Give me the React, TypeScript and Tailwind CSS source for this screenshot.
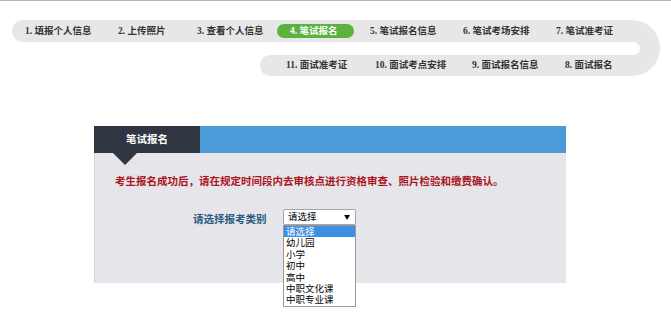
import React from "react";

const F = { fontFamily: '"Liberation Serif","Noto Sans CJK SC",serif' };
const S = { fontFamily: '"Noto Sans CJK SC",sans-serif' };

export default function App() {
  const row1 = [
    { t: "1. 填报个人信息", w: "w-[93px]" },
    { t: "2. 上传照片", w: "w-[79px]" },
    { t: "3. 查看个人信息", w: "w-[80px]" },
  ];
  const row1b = [
    { t: "5. 笔试报名信息", w: "w-[93px]" },
    { t: "6. 笔试考场安排", w: "w-[93px]" },
    { t: "7. 笔试准考证", w: "w-[70px]" },
  ];
  const row2 = [
    { t: "11. 面试准考证", w: "w-[89px]" },
    { t: "10. 面试考点安排", w: "w-[97px]" },
    { t: "9. 面试报名信息", w: "w-[93px]" },
    { t: "8. 面试报名", w: "w-[60px]" },
  ];
  const opts = ["请选择", "幼儿园", "小学", "初中", "高中", "中职文化课", "中职专业课"];

  return (
    <div className="w-[671px] h-[326px] bg-white overflow-hidden relative" style={F}>
      <div className="h-px bg-[#a3bac9]" />
      {/* steps */}
      <div className="ml-[12px] mt-[19px] w-[648px] flex text-[9.5px] font-bold text-[#333]">
        <div className="w-[620px] flex flex-col">
          <div className="h-[22px] bg-[#e7e7e7] rounded-l-full flex items-center pl-[13px]">
            {row1.map((s) => (
              <div key={s.t} className={`${s.w} shrink-0 whitespace-nowrap`}>{s.t}</div>
            ))}
            <div className="w-[77px] h-[14px] shrink-0 rounded-full bg-[#5bb33f] text-white flex items-center pl-[13px] whitespace-nowrap mr-[16px]">
              4. 笔试报名
            </div>
            {row1b.map((s) => (
              <div key={s.t} className={`${s.w} shrink-0 whitespace-nowrap`}>{s.t}</div>
            ))}
          </div>
          <div className="h-[13px]" />
          <div className="ml-[248px] h-[21px] bg-[#e7e7e7] rounded-l-full flex items-center pl-[26px]">
            {row2.map((s) => (
              <div key={s.t} className={`${s.w} shrink-0 whitespace-nowrap`}>{s.t}</div>
            ))}
          </div>
        </div>
        <div className="w-[28px] h-[56px] bg-[#e7e7e7] rounded-r-[28px] overflow-hidden flex flex-col">
          <div className="h-[22px]" />
          <div className="h-[13px] flex">
            <div className="w-[8px] h-full bg-white rounded-r-full" />
          </div>
        </div>
      </div>

      {/* panel */}
      <div className="ml-[94px] mt-[50px] w-[472px]">
        <div className="h-[27px] bg-[#4a9bd8] flex">
          <div className="w-[106px] h-full bg-[#2f3541] relative flex items-center justify-center text-white text-[10.5px] font-bold">
            笔试报名
            <div className="absolute left-[19px] top-[27px] w-0 h-0 border-l-[12px] border-r-[12px] border-t-[12px] border-l-transparent border-r-transparent border-t-[#2f3541]" />
          </div>
        </div>
        <div className="h-[130px] bg-[#e6e5e9] border-l border-[#d6d5d9] pt-[22px] pl-[20px]">
          <div className="text-[10.5px] leading-[13px] font-bold text-[#a9161f] whitespace-nowrap">
            考生报名成功后，请在规定时间段内去审核点进行资格审查、照片检验和缴费确认。
          </div>
          <div className="mt-[21px] flex items-start">
            <div className="ml-[78px] w-[90px] mt-[4px] text-[10.5px] leading-[13px] font-bold text-[#2a5c7e] whitespace-nowrap">
              请选择报考类别
            </div>
            <div className="relative">
              <div
                className="w-[73px] h-[16px] bg-white border border-[#a5a5a5] rounded-[2px] flex items-center justify-between pl-[4px] pr-[5px] text-[9.5px] text-black"
                style={S}
              >
                <span className="leading-none">请选择</span>
                <span className="text-[6px] leading-none">▼</span>
              </div>
              <div
                className="absolute left-0 top-[16px] w-[73px] bg-white border border-[#9a9a9a] text-[9.5px] text-black"
                style={S}
              >
                {opts.map((o, i) => (
                  <div
                    key={o}
                    className={`h-[11.4px] leading-[11.4px] pl-[2px] whitespace-nowrap ${i === 0 ? "bg-[#3d8fe3] text-white" : ""}`}
                  >
                    {o}
                  </div>
                ))}
              </div>
            </div>
          </div>
        </div>
      </div>
    </div>
  );
}
